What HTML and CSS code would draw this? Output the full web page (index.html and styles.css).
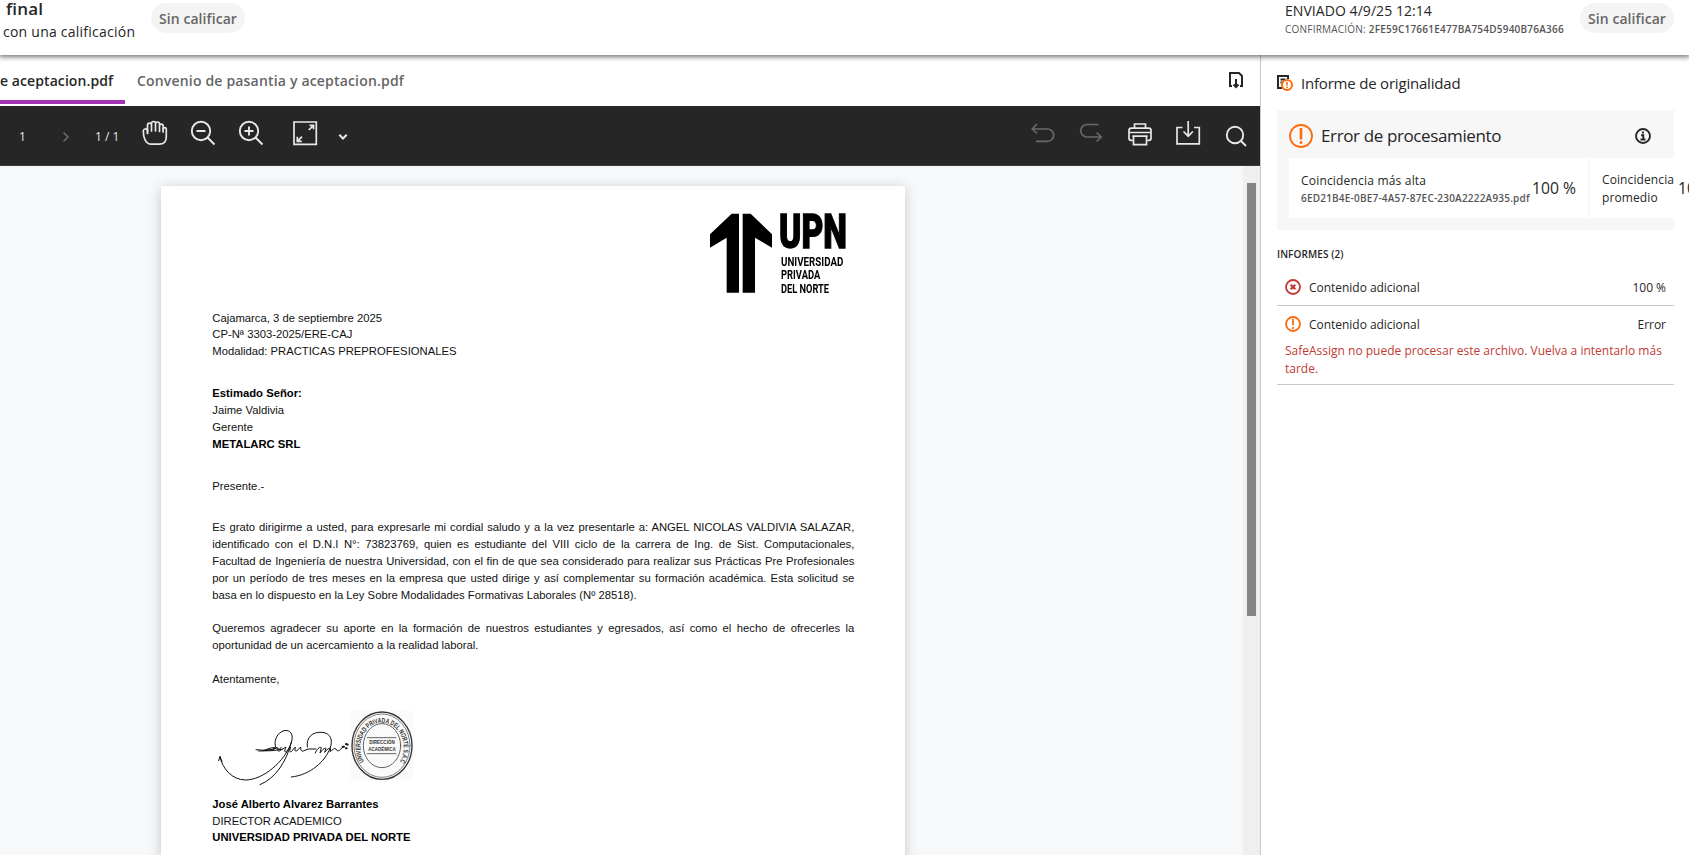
FILE: index.html
```html
<!DOCTYPE html>
<html lang="es">
<head>
<meta charset="utf-8">
<title>Informe de originalidad</title>
<link rel="stylesheet" href="styles.css">
</head>
<body>
<div class="app">
  <header class="header">
    <div class="assessment">
      <div class="assessment-title">final</div>
      <div class="assessment-sub">con una calificación</div>
    </div>
    <span class="pill">Sin calificar</span>
    <div class="submission">
      <div class="sent">ENVIADO 4/9/25 12:14</div>
      <div class="confirm">CONFIRMACIÓN: <b>2FE59C17661E477BA754D5940B76A366</b></div>
    </div>
    <span class="pill">Sin calificar</span>
  </header>
  <div class="content">
    <main class="main">
      <nav class="tabs">
        <div class="tab active"><span>e aceptacion.pdf</span></div>
        <div class="tab"><span>Convenio de pasantia y aceptacion.pdf</span></div>
        <svg class="file-dl" width="16" height="18" viewBox="0 0 16 18" fill="none" stroke="#262626" stroke-width="2"><path d="M4 15H2V2h9l3 3v10h-2M8 8v8M5.500 13.500L8 16l2.500-2.500"/></svg>
      </nav>
      <div class="toolbar">
        <span class="page-no">1</span>
        <svg class="next" width="8" height="12" viewBox="0 0 8 12" fill="none" stroke="#686868" stroke-width="1.700"><path d="M1.500 1.500L6 6l-4.500 4.500"/></svg>
        <span class="page-count">1 / 1</span>
        <svg class="hand" width="26" height="26" viewBox="0 0 26 26" fill="none" stroke="#e8e8e8" stroke-width="1.700" stroke-linecap="round" stroke-linejoin="round"><path d="M5.500 13V5.200a2 2 0 0 1 4 0V11M9.500 11V3.500a1.900 1.900 0 0 1 4 0V11M13.500 11V4a1.900 1.900 0 0 1 4 0v7.500M17.500 11.500V6a1.800 1.800 0 0 1 3.600 0V12"/><path d="M5.500 13.500V10C4.500 8.400 1.300 8.600 1.300 11c0 6 2 13.200 8 13.200h7.700c5 0 7.300-3.200 7.300-7.500V9.500c0-2.500-3.200-2.500-3.200-.2"/></svg>
        <svg class="zoom-out" width="26" height="26" viewBox="0 0 26 26" fill="none" stroke="#e8e8e8" stroke-width="1.900"><circle cx="11" cy="11" r="9.200"/><path d="M17.500 17.500l7 7M6.500 11h9"/></svg>
        <svg class="zoom-in" width="26" height="26" viewBox="0 0 26 26" fill="none" stroke="#e8e8e8" stroke-width="1.900"><circle cx="11" cy="11" r="9.200"/><path d="M17.500 17.500l7 7M6.500 11h9M11 6.500v9"/></svg>
        <svg class="fit" width="26" height="26" viewBox="0 0 26 26" fill="none" stroke="#e8e8e8" stroke-width="1.700"><path d="M2 2h22.300v22.300H2z"/><path d="M17.500 5.300h4v4M21.500 5.300L16.800 10M5.300 16.800v4.500h4.500M5.300 21.300l4.700-4.700"/></svg>
        <svg class="caret" width="10" height="8" viewBox="0 0 10 8" fill="none" stroke="#e8e8e8" stroke-width="2"><path d="M1.300 1.800L5 5.500l3.700-3.700"/></svg>
        <div class="tools">
          <svg class="undo" width="24" height="20" viewBox="0 0 24 20" fill="none" stroke="#686868" stroke-width="1.700"><path d="M6 1L1.300 6 6 10.500M1.500 6h15a6 6 0 0 1 0 12.300H5"/></svg>
          <svg class="redo" width="24" height="20" viewBox="0 0 24 20" fill="none" stroke="#686868" stroke-width="1.700"><path d="M19.500 1.500H8a6.200 6.200 0 0 0 0 12.500h14.500M17.500 9.500l4.800 4.500-4.800 4.500"/></svg>
          <svg class="print" width="26" height="26" viewBox="0 0 26 26" fill="none" stroke="#e8e8e8" stroke-width="1.700"><path d="M7.500 7V3h11v4M5.500 19.300H4a2 2 0 0 1-2-2V9.500a2.300 2.300 0 0 1 2.300-2.300h17.400A2.300 2.300 0 0 1 24 9.500v7.800a2 2 0 0 1-2 2h-1.500M2 11.500h22M5.300 15.200h15.400M6.500 15.200h13v8.500h-13z"/></svg>
          <svg class="download" width="26" height="26" viewBox="0 0 26 26" fill="none" stroke="#e8e8e8" stroke-width="1.700"><path d="M7.500 7.500H2v16.300h22.300V7.500H19M13.200 1v15M8.500 11.500l4.700 4.700 4.700-4.700"/></svg>
          <svg class="search" width="22" height="22" viewBox="0 0 22 22" fill="none" stroke="#e8e8e8" stroke-width="1.900"><circle cx="10" cy="10" r="8.200"/><path d="M15.500 15.500l5.500 5.500"/></svg>
        </div>
      </div>
      <div class="viewer">
        <article class="page">
          <svg class="logo" width="200" height="119" viewBox="0 0 600 357">
            <path d="M60 130L125 68h22v237h-37V140L60 170zM158 68h24l64 62v40l-51-30v165h-37z"/>
            <g font-family="Roboto, sans-serif" font-weight="900">
              <text x="267" y="170" font-size="143" textLength="204" lengthAdjust="spacingAndGlyphs" stroke="#000" stroke-width="4">UPN</text>
              <g font-size="36" font-weight="700">
                <text x="273" y="225" textLength="187" lengthAdjust="spacingAndGlyphs">UNIVERSIDAD</text>
                <text x="273" y="265" textLength="118" lengthAdjust="spacingAndGlyphs">PRIVADA</text>
                <text x="273" y="306" textLength="144" lengthAdjust="spacingAndGlyphs">DEL NORTE</text>
              </g>
            </g>
          </svg>
          <section class="block">
            <p>Cajamarca, 3 de septiembre 2025</p>
            <p>CP-Nª 3303-2025/ERE-CAJ</p>
            <p>Modalidad: PRACTICAS PREPROFESIONALES</p>
          </section>
          <section class="block">
            <p><b>Estimado Señor:</b></p>
            <p>Jaime Valdivia</p>
            <p>Gerente</p>
            <p><b>METALARC SRL</b></p>
          </section>
          <section class="block">
            <p>Presente.-</p>
          </section>
          <section class="block tight">
            <p class="full">Es grato dirigirme a usted, para expresarle mi cordial saludo y a la vez presentarle a: ANGEL NICOLAS VALDIVIA SALAZAR,</p>
            <p class="full">identificado con el D.N.I N°: 73823769, quien es estudiante del VIII ciclo de la carrera de Ing. de Sist. Computacionales,</p>
            <p class="full">Facultad de Ingeniería de nuestra Universidad, con el fin de que sea considerado para realizar sus Prácticas Pre Profesionales</p>
            <p class="full">por un período de tres meses en la empresa que usted dirige y así complementar su formación académica. Esta solicitud se</p>
            <p>basa en lo dispuesto en la Ley Sobre Modalidades Formativas Laborales (Nº 28518).</p>
          </section>
          <section class="block tight">
            <p class="full">Queremos agradecer su aporte en la formación de nuestros estudiantes y egresados, así como el hecho de ofrecerles la</p>
            <p>oportunidad de un acercamiento a la realidad laboral.</p>
          </section>
          <p>Atentamente,</p>
          <svg class="signature" width="218" height="108" viewBox="36 -7 654 324" fill="none" stroke="#111" stroke-width="3" stroke-linecap="round" stroke-linejoin="round">
            <path d="M56 211l4-13 6 16M60 200c8 36 36 68 76 69 54 0 118-56 138-112 8-26-4-40-22-36-20 6-30 28-26 46 4 12 14 12 18 4M180 283c48-20 80-70 94-128"/>
            <path d="M168 178l26 2 20-2 12-6c-12-2-26 6-38 9l30-3 14-6c6 2-4 12 6 10l20-12c-4 10-6 16 0 14l14-14c-4 12-4 16 2 14l12-14c-2 8-2 14 4 12l12-12c0 10 2 14 8 12l14-6 24 0M176 182l40-1 30-4M322 170c-4-30 16-46 44-44 26 2 34 24 24 48-14 38-58 80-116 86"/>
            <path d="M346 188c4-10 12-20 18-16l-4 16c6-8 12-16 18-14l-4 12c6-8 14-14 18-12l-2 10c8-6 14-12 18-8 4 10 10 6 22-8" />
            <path d="M428 169l4 0M438 161l5 2M438 174l2 0" stroke-width="6"/>
            <rect x="452" y="62" width="188" height="208" fill="#fafafa" stroke="none"/>
            <ellipse cx="546" cy="166" rx="90" ry="101" stroke="#333" stroke-width="4"/>
            <ellipse cx="546" cy="166" rx="84" ry="95" stroke="#444" stroke-width="2"/>
            <ellipse cx="546" cy="166" rx="56" ry="66" stroke="#444" stroke-width="2.500"/>
            <path d="M502 142h86M502 190h86" stroke="#444" stroke-width="2.500"/>
            <path id="ring" d="M492 214A65 75 0 1 1 600 214" stroke="none"/>
            <g fill="#333" stroke="none" font-family="Liberation Sans, Arial, sans-serif" font-weight="700">
              <text font-size="21"><textPath href="#ring" textLength="312" lengthAdjust="spacingAndGlyphs">UNIVERSIDAD PRIVADA DEL NORTE S.A.C.</textPath></text>
              <text x="508" y="162" font-size="16" textLength="76" lengthAdjust="spacingAndGlyphs">DIRECCIÓN</text>
              <text x="505" y="182" font-size="16" textLength="82" lengthAdjust="spacingAndGlyphs">ACADÉMICA</text>
            </g>
          </svg>
          <p><b>José Alberto Alvarez Barrantes</b></p>
          <p>DIRECTOR ACADEMICO</p>
          <p><b>UNIVERSIDAD PRIVADA DEL NORTE</b></p>
        </article>
        <div class="scroll"><div class="thumb"></div></div>
      </div>
    </main>
    <aside class="panel">
      <h2 class="panel-title">
        <svg width="17" height="17" viewBox="0 0 17 17" fill="none"><path d="M5 13H1V1h10v3M3.500 4.500h5M3.500 7.500h2" stroke="#262626" stroke-width="2"/><circle cx="10" cy="10" r="5" fill="#fff" stroke="#ff6a0a" stroke-width="2"/><path d="M10 7v3.500M10 11.500V13" stroke="#ff6a0a" stroke-width="1.600"/></svg>
        <span>Informe de originalidad</span>
      </h2>
      <section class="card">
        <div class="card-head">
          <svg width="24" height="24" viewBox="0 0 24 24" fill="none" stroke="#ff6a0a" stroke-width="1.800"><circle cx="12" cy="12" r="11"/><path d="M12 4v11.500M12 17.300v2.500" stroke-width="2.600"/></svg>
          <span class="card-title">Error de procesamiento</span>
          <svg class="info" width="16" height="16" viewBox="0 0 16 16" fill="none" stroke="#262626" stroke-width="1.900"><circle cx="8" cy="8" r="7"/><path d="M6 7.300h2.300v4M5.500 11.500h5M8 3.500v2"/></svg>
        </div>
        <div class="matches">
          <div class="match first">
            <div class="match-text"><div class="label">Coincidencia más alta</div><div class="file">6ED21B4E-0BE7-4A57-87EC-230A2222A935.pdf</div></div>
            <div class="pct">100 %</div>
          </div>
          <div class="match second">
            <div class="label wrap">Coincidencia promedio</div>
            <div class="pct">100 %</div>
          </div>
        </div>
      </section>
      <h3 class="reports">INFORMES (2)</h3>
      <div class="report">
        <div class="row">
          <svg width="16" height="16" viewBox="0 0 16 16" fill="none" stroke="#c13a34" stroke-width="1.800"><circle cx="8" cy="8" r="7"/><path d="M5.700 5.700l4.600 4.600M10.300 5.700l-4.600 4.600" stroke-width="2.200"/></svg>
          <span class="name">Contenido adicional</span><span class="value">100 %</span>
        </div>
      </div>
      <div class="report">
        <div class="row">
          <svg width="16" height="16" viewBox="0 0 16 16" fill="none" stroke="#ff6a0a" stroke-width="1.800"><circle cx="8" cy="8" r="7"/><path d="M8 3v6.300M8 11v2"/></svg>
          <span class="name">Contenido adicional</span><span class="value">Error</span>
        </div>
        <p class="error">SafeAssign no puede procesar este archivo. Vuelva a intentarlo más tarde.</p>
      </div>
    </aside>
  </div>
</div>
</body>
</html>
```
FILE: styles.css
```css
* { box-sizing: border-box; }
body { margin: 0; overflow: hidden; background: #fff; color: #262626; font-family: "Open Sans", "Noto Sans", sans-serif; }
svg { display: block; flex: none; }
p, h2, h3 { margin: 0; font-weight: 400; }
.app { display: flex; flex-direction: column; width: 1689px; height: 855px; overflow: hidden; }

.header { position: relative; z-index: 2; flex: none; display: flex; align-items: flex-start; height: 55px; padding-right: 15px; background: #fff; box-shadow: 0 1px 5px 1px rgba(0, 0, 0, .55); white-space: nowrap; }
.assessment { width: 151px; }
.assessment-title { padding-left: 6px; height: 20px; line-height: 18px; font-size: 17px; font-weight: 600; letter-spacing: .2px; }
.assessment-sub { padding-left: 3px; line-height: 24px; font-size: 14px; letter-spacing: .24px; }
.pill { width: 94px; height: 30px; margin-top: 3px; border-radius: 15px; background: #f4f4f4; color: #666; font-size: 14px; font-weight: 600; line-height: 31px; letter-spacing: .06px; text-align: center; }
.submission { width: 295px; margin-left: auto; }
.sent { height: 21px; font-size: 14px; line-height: 21px; letter-spacing: .06px; }
.confirm { font-size: 10px; line-height: 17px; color: #555; letter-spacing: .22px; }
.confirm b { font-weight: 600; }

.content { flex: 1; display: flex; min-height: 0; }
.main { width: 1260px; display: flex; flex-direction: column; }
.tabs { flex: none; height: 51px; display: flex; align-items: flex-start; white-space: nowrap; font-size: 14px; font-weight: 600; letter-spacing: .18px; color: #666; }
.tab { height: 49px; padding-top: 15px; line-height: 22px; margin-right: 12px; }
.tab.active { width: 125px; color: #262626; border-bottom: 4px solid #a234b5; letter-spacing: .08px; }
.file-dl { margin: 16px 16px 0 auto; }

.toolbar { flex: none; height: 60px; background: #262626; color: #e8e8e8; display: flex; align-items: flex-start; font-size: 12px; line-height: 18px; border-bottom: 1px solid #3a3a3a; }
.page-no { margin: 22px 0 0 19px; width: 43px; }
.next { margin-top: 25px; }
.page-count { margin: 22px 0 0 25px; width: 47px; }
.hand { margin-top: 14px; }
.zoom-out { margin: 14px 0 0 22px; }
.zoom-in { margin: 14px 0 0 22px; }
.fit { margin: 14px 0 0 28px; }
.caret { margin: 27px 0 0 20px; }
.tools { margin-left: auto; display: flex; padding-right: 13px; }
.undo { margin: 17px 24px 0 0; }
.redo { margin: 17px 24px 0 0; }
.print { margin: 15px 22px 0 0; }
.download { margin: 14px 24px 0 0; }
.search { margin-top: 19px; }

.viewer { flex: 1; min-height: 0; display: flex; background: #f6f8fa; overflow: hidden; }
.page { width: 744px; height: 1000px; margin: 20px 0 0 161px; padding: 4.600px 0 0 51.300px; background: #fff; box-shadow: 0 2px 12px rgba(0, 0, 0, .2); color: #111; font: 11.270px/16.850px "Liberation Sans", Arial, sans-serif; white-space: nowrap; }
.page p { width: 642px; height: 16.850px; }
.page b { color: #000; }
.page .full { text-align: justify; text-align-last: justify; white-space: normal; }
.logo { margin-left: 477.700px; filter: blur(.3px); }
.block { margin-bottom: 25px; }
.block.tight { margin-bottom: 16.850px; }
.scroll { width: 17px; margin-left: auto; padding: 17px 4px 0; background: #efefef; }
.thumb { height: 433px; background: #858585; }

.panel { width: 429px; border-left: 1px solid #c8c8c8; padding: 18px 15px 0 16px; }
.panel-title { display: flex; height: 37px; gap: 7px; font-size: 15px; line-height: 20px; letter-spacing: -.2px; }
.panel-title svg { margin-top: 2px; }
.card { height: 120px; background: #f7f7f7; padding-left: 12px; }
.card-head { display: flex; align-items: center; height: 48px; padding: 4px 23px 0 0; }
.card-title { margin: -2px 0 0 8px; font-size: 17px; letter-spacing: -.38px; }
.info { margin-left: auto; }
.matches { display: flex; gap: 2px; height: 60px; white-space: nowrap; }
.match { background: #fff; display: flex; align-items: center; padding-left: 12px; }
.first { width: 299px; flex: none; }
.second { flex: 1; min-width: 0; }
.match-text { width: 231px; padding-top: 1px; }
.label { font-size: 12px; line-height: 18px; letter-spacing: .19px; }
.label.wrap { width: 76px; flex: none; white-space: normal; padding-top: 2px; letter-spacing: .1px; }
.file { font-size: 10px; line-height: 16px; font-weight: 600; letter-spacing: .2px; color: #555; }
.pct { font-size: 15.700px; }
.reports { padding-top: 15px; height: 39px; font-size: 10px; line-height: 18px; font-weight: 600; letter-spacing: .1px; }
.report { border-bottom: 1px solid #c8c8c8; padding: 0 8px; }
.report .row { display: flex; height: 36px; align-items: center; gap: 8px; font-size: 12px; letter-spacing: -.03px; }
.value { margin-left: auto; }
.error { color: #c13a34; font-size: 12px; line-height: 18px; padding-bottom: 6px; }
```
